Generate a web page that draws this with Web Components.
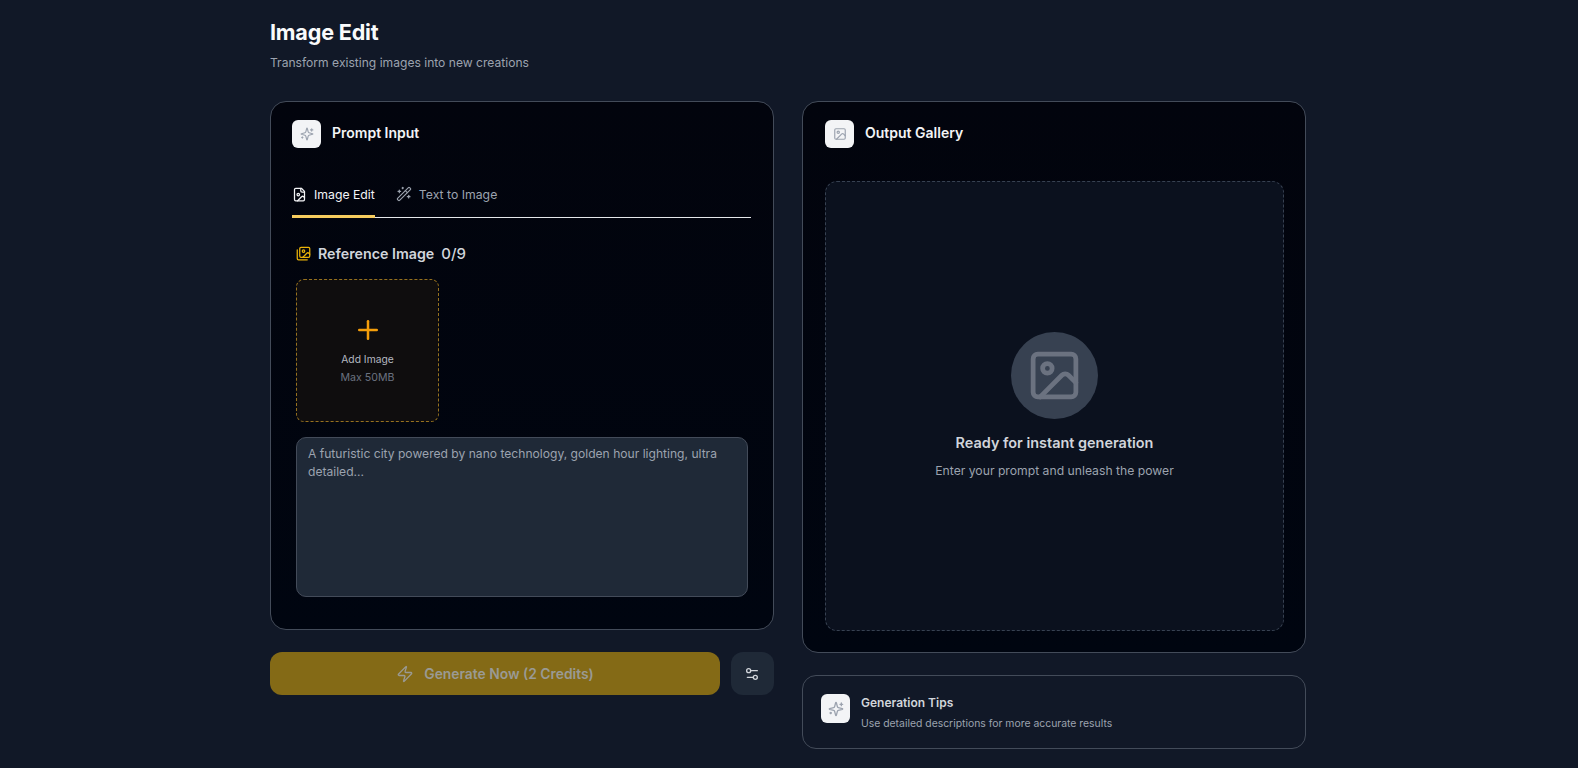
<!DOCTYPE html>
<html lang="en">
<head>
<meta charset="utf-8">
<title>Image Edit</title>
<style>
  html, body { margin: 0; height: 100%; }
  body {
    background: #111827;
    color: #f3f4f6;
    font-family: Inter, "Liberation Sans", sans-serif;
    overflow: hidden;
  }
</style>
</head>
<body>
<edit-page>
  <page-header slot="header" title="Image Edit" subtitle="Transform existing images into new creations"></page-header>

  <div slot="left">
    <panel-card icon="sparkles" heading="Prompt Input" style="--pad: 18px 22px 32px 21px">
      <tab-bar></tab-bar>
      <reference-uploader></reference-uploader>
      <prompt-box>A futuristic city powered by nano technology, golden hour lighting, ultra detailed...</prompt-box>
    </panel-card>
    <generate-bar></generate-bar>
  </div>

  <div slot="right">
    <panel-card icon="image" heading="Output Gallery" style="--pad: 18px 21px 21px 22px">
      <output-gallery></output-gallery>
    </panel-card>
    <tips-card></tips-card>
  </div>
</edit-page>

<script>
/**
 * lucide style icon paths
 */
const ICONS = {
  sparkles: '<path d="M9.937 15.5A2 2 0 0 0 8.5 14.063l-6.135-1.582a.5.5 0 0 1 0-.962L8.5 9.936A2 2 0 0 0 9.937 8.5l1.582-6.135a.5.5 0 0 1 .963 0L14.063 8.5A2 2 0 0 0 15.5 9.937l6.135 1.581a.5.5 0 0 1 0 .964L15.5 14.063a2 2 0 0 0-1.437 1.437l-1.582 6.135a.5.5 0 0 1-.963 0z"/><path d="M20 3v4"/><path d="M22 5h-4"/><path d="M4 17v2"/><path d="M5 18H3"/>',
  image: '<rect x="3" y="3" width="18" height="18" rx="2"/><circle cx="9" cy="9" r="2"/><path d="m21 15-3.086-3.086a2 2 0 0 0-2.828 0L6 21"/>',
  images: '<path d="M18 22H4a2 2 0 0 1-2-2V6"/><path d="m22 13-1.296-1.296a2.41 2.41 0 0 0-3.408 0L11 18"/><circle cx="12" cy="8" r="2"/><rect x="6" y="2" width="16" height="16" rx="2"/>',
  fileImage: '<path d="M15 2H6a2 2 0 0 0-2 2v16a2 2 0 0 0 2 2h12a2 2 0 0 0 2-2V7Z"/><path d="M14 2v4a2 2 0 0 0 2 2h4"/><circle cx="10" cy="12" r="2"/><path d="m20 17-1.296-1.296a2.41 2.41 0 0 0-3.408 0L9 22"/>',
  wand: '<path d="m21.64 3.64-1.28-1.28a1.21 1.21 0 0 0-1.72 0L2.36 18.64a1.21 1.21 0 0 0 0 1.72l1.28 1.28a1.2 1.2 0 0 0 1.72 0L21.64 5.36a1.2 1.2 0 0 0 0-1.72"/><path d="m14 7 3 3"/><path d="M5 6v4"/><path d="M19 14v4"/><path d="M10 2v2"/><path d="M7 8H3"/><path d="M21 16h-4"/><path d="M11 3H9"/>',
  plus: '<path d="M5 12h14"/><path d="M12 5v14"/>',
  zap: '<path d="M4 14a1 1 0 0 1-.78-1.63l9.9-10.2a.5.5 0 0 1 .86.46l-1.92 6.02A1 1 0 0 0 13 10h7a1 1 0 0 1 .78 1.63l-9.9 10.2a.5.5 0 0 1-.86-.46l1.92-6.02A1 1 0 0 0 11 14z"/>',
  sliders: '<path d="M20 7h-9"/><path d="M14 17H5"/><circle cx="17" cy="17" r="3"/><circle cx="7" cy="7" r="3"/>',
};

/**
 * SVG icon
 */
class UiIcon extends HTMLElement {
  connectedCallback() {
    const size = this.getAttribute('size') || 16;
    const sw = this.getAttribute('stroke') || 2;
    this.attachShadow({ mode: 'open' });
    this.shadowRoot.innerHTML = `
      <style>
        :host { display: inline-flex; flex: none; }
        svg { display: block; }
      </style>
      <svg xmlns="http://www.w3.org/2000/svg" width="${size}" height="${size}" viewBox="0 0 24 24"
        fill="none" stroke="currentColor" stroke-width="${sw}" stroke-linecap="round" stroke-linejoin="round">
        ${ICONS[this.getAttribute('name')]}
      </svg>
    `;
  }
}
customElements.define('ui-icon', UiIcon);

/**
 * Two column page frame
 */
class EditPage extends HTMLElement {
  constructor() {
    super();
    this.attachShadow({ mode: 'open' });
    this.shadowRoot.innerHTML = `
      <style>
        :host { display: block; width: 1036px; margin-left: 270px; }
        .cols {
          display: grid;
          grid-template-columns: 504px 504px;
          column-gap: 28px;
          align-items: start;
        }
        ::slotted(div) { display: flex; flex-direction: column; gap: 22px; }
      </style>
      <slot name="header"></slot>
      <div class="cols">
        <slot name="left"></slot>
        <slot name="right"></slot>
      </div>
    `;
  }
}
customElements.define('edit-page', EditPage);

/**
 * Page title
 */
class PageHeader extends HTMLElement {
  connectedCallback() {
    this.attachShadow({ mode: 'open' });
    this.shadowRoot.innerHTML = `
      <style>
        :host { display: block; padding: 16px 0 29px; }
        h1 { margin: 0; font-size: 21.6px; line-height: 32px; font-weight: 700; color: #f9fafb; letter-spacing: -0.2px; }
        p { margin: 6px 0 0; font-size: 12.1px; line-height: 18px; color: #9ca3af; }
      </style>
      <h1>${this.getAttribute('title')}</h1>
      <p>${this.getAttribute('subtitle')}</p>
    `;
  }
}
customElements.define('page-header', PageHeader);

/**
 * Dark card with icon heading
 */
class PanelCard extends HTMLElement {
  connectedCallback() {
    this.attachShadow({ mode: 'open' });
    this.shadowRoot.innerHTML = `
      <style>
        :host {
          display: block;
          box-sizing: border-box;
          padding: var(--pad);
          background: linear-gradient(180deg, #02040d 0%, #000510 100%);
          border: 1px solid #434b59;
          border-radius: 16px;
        }
        .head { display: flex; align-items: center; gap: 11px; height: 28px; margin-bottom: 33px; }
        .badge {
          width: 29px; height: 28px; border-radius: 6px; background: #f3f4f6; color: #9ca3af;
          display: flex; align-items: center; justify-content: center;
        }
        h2 { margin: -4px 0 0; font-size: 14px; font-weight: 600; color: #f3f4f6; }
      </style>
      <div class="head">
        <div class="badge"><ui-icon name="${this.getAttribute('icon')}" size="14"></ui-icon></div>
        <h2>${this.getAttribute('heading')}</h2>
      </div>
      <slot></slot>
    `;
  }
}
customElements.define('panel-card', PanelCard);

/**
 * Mode tabs
 */
class TabBar extends HTMLElement {
  constructor() {
    super();
    this.attachShadow({ mode: 'open' });
    this.shadowRoot.innerHTML = `
      <style>
        /* margin-top collapses with the card head's 33px margin */
        :host { display: flex; gap: 21px; margin-top: 38px; border-bottom: 1px solid #e5e7eb; margin-bottom: 25px; }
        .tab {
          display: flex; align-items: center; gap: 7px; height: 16px; padding-bottom: 13px;
          border-bottom: 3px solid transparent; margin-bottom: -1px; color: #9ca3af; font-size: 12.25px;
        }
        .tab.on { color: #f3f4f6; border-bottom-color: #f6cc5e; }
      </style>
      <div class="tab on"><ui-icon name="fileImage" size="15"></ui-icon>Image Edit</div>
      <div class="tab"><ui-icon name="wand" size="16" stroke="1.75"></ui-icon>Text to Image</div>
    `;
  }
}
customElements.define('tab-bar', TabBar);

/**
 * Reference image picker
 */
class ReferenceUploader extends HTMLElement {
  constructor() {
    super();
    this.attachShadow({ mode: 'open' });
    this.shadowRoot.innerHTML = `
      <style>
        :host { display: block; padding: 0 4px; margin-bottom: 15px; }
        .title {
          display: flex; align-items: center; gap: 7px; height: 20px; margin-bottom: 16px;
          font-size: 14.25px; font-weight: 600; color: #d1d5db;
        }
        .title ui-icon { color: #eab308; }
        .count { font-size: 15px; font-weight: 500; }
        .drop {
          box-sizing: border-box; width: 143px; height: 143px;
          border: 1px dashed #96711f; border-radius: 8px; background: #0f0d0e;
          display: flex; flex-direction: column; align-items: center; justify-content: center;
        }
        .drop ui-icon { color: #f59e0b; margin-bottom: 6px; }
        .add { font-size: 10.3px; line-height: 16px; color: #b4b8c0; }
        .max { font-size: 10.6px; line-height: 16px; color: #6b7280; margin-top: 3px; }
      </style>
      <div class="title"><ui-icon name="images" size="15"></ui-icon><span>Reference Image</span><span class="count">0/9</span></div>
      <div class="drop">
        <ui-icon name="plus" size="30" stroke="2"></ui-icon>
        <div class="add">Add Image</div>
        <div class="max">Max 50MB</div>
      </div>
    `;
  }
}
customElements.define('reference-uploader', ReferenceUploader);

/**
 * Prompt text area
 */
class PromptBox extends HTMLElement {
  constructor() {
    super();
    this.attachShadow({ mode: 'open' });
    this.shadowRoot.innerHTML = `
      <style>
        :host {
          display: block; box-sizing: border-box; width: 452px; height: 160px; margin-left: 4px;
          padding: 7px 11px; background: #1f2937; border: 1px solid #434b59; border-radius: 10px;
          font-size: 12.1px; line-height: 18px; color: #9ca3af;
        }
      </style>
      <slot></slot>
    `;
  }
}
customElements.define('prompt-box', PromptBox);

/**
 * Generate button and settings button
 */
class GenerateBar extends HTMLElement {
  constructor() {
    super();
    this.attachShadow({ mode: 'open' });
    this.shadowRoot.innerHTML = `
      <style>
        :host { display: flex; gap: 11px; }
        .go {
          flex: 1; height: 43px; border-radius: 12px; background: #846a16; color: #9a9a94;
          display: flex; align-items: center; justify-content: center; gap: 10px;
          font-size: 13.85px; font-weight: 600;
        }
        .opt {
          box-sizing: border-box; padding-right: 1px;
          width: 43px; height: 43px; border-radius: 12px; background: #1f2937; color: #d1d5db;
          display: flex; align-items: center; justify-content: center;
        }
      </style>
      <div class="go"><ui-icon name="zap" size="18" stroke="1.75"></ui-icon>Generate Now (2 Credits)</div>
      <div class="opt"><ui-icon name="sliders" size="16"></ui-icon></div>
    `;
  }
}
customElements.define('generate-bar', GenerateBar);

/**
 * Empty output area
 */
class OutputGallery extends HTMLElement {
  constructor() {
    super();
    this.attachShadow({ mode: 'open' });
    this.shadowRoot.innerHTML = `
      <style>
        :host {
          display: flex; flex-direction: column; align-items: center; justify-content: center;
          box-sizing: border-box; height: 450px; background: #0b111e;
          border: 1px dashed #374151; border-radius: 12px;
        }
        .circle {
          width: 87px; height: 87px; border-radius: 50%; background: #374151; color: #6b7280;
          display: flex; align-items: center; justify-content: center; margin-bottom: 14px;
        }
        h3 { margin: 0 0 9px; font-size: 14.45px; line-height: 20px; font-weight: 600; color: #d1d5db; }
        p { margin: 0; font-size: 12.2px; line-height: 18px; color: #9ca3af; }
      </style>
      <div class="circle"><ui-icon name="image" size="57"></ui-icon></div>
      <h3>Ready for instant generation</h3>
      <p>Enter your prompt and unleash the power</p>
    `;
  }
}
customElements.define('output-gallery', OutputGallery);

/**
 * Hint card
 */
class TipsCard extends HTMLElement {
  constructor() {
    super();
    this.attachShadow({ mode: 'open' });
    this.shadowRoot.innerHTML = `
      <style>
        :host {
          display: flex; align-items: flex-start; gap: 11px; box-sizing: border-box; height: 74px;
          padding: 18px 18px 0; border: 1px solid #434b59; border-radius: 14px;
        }
        .badge {
          width: 29px; height: 29px; border-radius: 6px; background: #f3f4f6; color: #9ca3af;
          display: flex; align-items: center; justify-content: center;
        }
        h4 { margin: 0 0 4px; font-size: 12px; line-height: 18px; font-weight: 600; color: #d1d5db; }
        p { margin: 0; font-size: 10.4px; line-height: 16px; color: #9ca3af; }
      </style>
      <div class="badge"><ui-icon name="sparkles" size="16"></ui-icon></div>
      <div>
        <h4>Generation Tips</h4>
        <p>Use detailed descriptions for more accurate results</p>
      </div>
    `;
  }
}
customElements.define('tips-card', TipsCard);
</script>
</body>
</html>
